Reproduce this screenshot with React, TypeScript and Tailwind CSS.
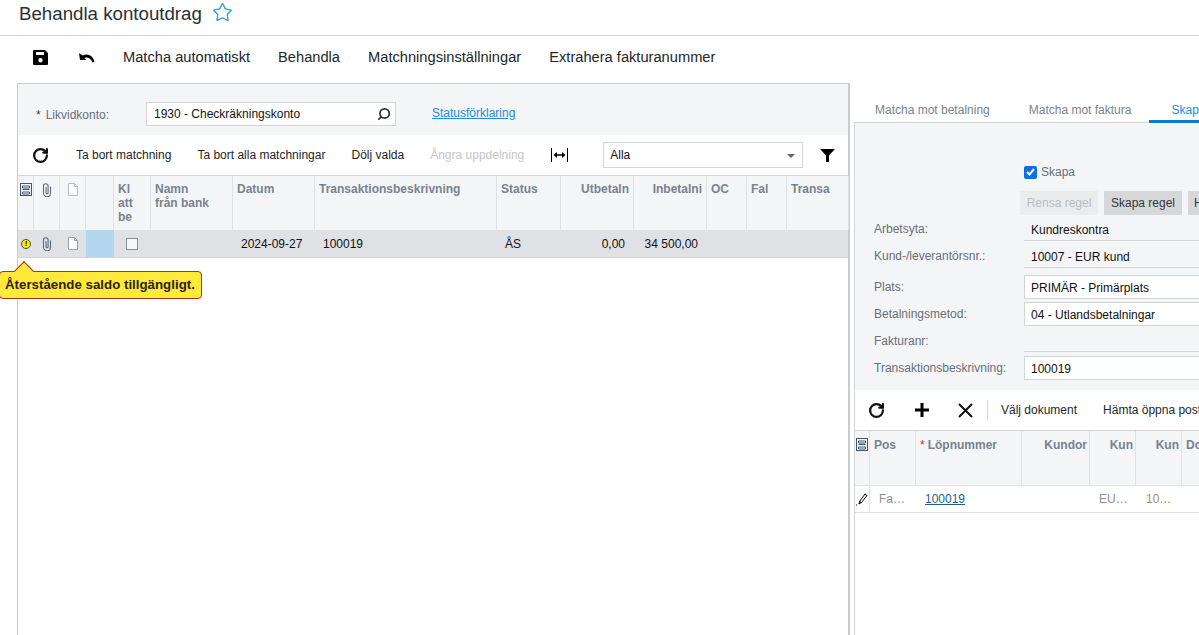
import React from 'react';
import { RotateCw, Search, Star } from 'lucide-react';

const SaveIcon = () => (
  <svg width="15" height="15" viewBox="0 0 15 15">
    <path fillRule="evenodd" fill="#000" d="M1 0h11l3 3v11a1 1 0 0 1-1 1H1a1 1 0 0 1-1-1V1a1 1 0 0 1 1-1zM3 2v3h8V2zM7.500 8a2.200 2.200 0 1 0 0 4.400a2.200 2.200 0 0 0 0-4.400z" />
  </svg>
);

const UndoIcon = () => (
  <svg width="16" height="11" viewBox="0 0 16 11">
    <path fill="#000" d="M0 1l1 7h6.500L5.200 6C8 4.600 11.500 5.500 13.500 10.500L15.500 10C14.500 4 9 0.500 3.500 3.500z" />
  </svg>
);

const ClipIcon = () => (
  <svg width="10" height="14" viewBox="0 0 10 14" fill="none" stroke="#5f6b78" strokeWidth="1.100">
    <path d="M8.500 3.500v6.700a3.500 3.500 0 0 1-7 0V3a2.300 2.300 0 0 1 4.600 0v6.800a1 1 0 0 1-2 0V4" />
  </svg>
);

const FileIcon = ({ color = '#9aa0a6' }: { color?: string }) => (
  <svg width="12" height="13" viewBox="0 0 12 13" fill="none">
    <path d="M1.500 0.500h6l3 3v9h-9z" fill="#fff" stroke={color} />
    <path d="M7.500 0.500v3h3" stroke={color} />
  </svg>
);

const NotesIcon = () => (
  <svg width="12" height="13" viewBox="0 0 12 13" fill="none" stroke="#46566a">
    <rect x="0.500" y="0.500" width="11" height="12" />
    <path d="M2.500 3h7v2h-7zM2.500 6.500h7M2.500 9h7v2h-7z" />
  </svg>
);

const FitIcon = () => (
  <svg width="17" height="14" viewBox="0 0 17 14" fill="#000">
    <rect x="0" y="0" width="1" height="14" />
    <rect x="16" y="0" width="1" height="14" />
    <path d="M2.500 7L6 4v2.300h5V4l3.500 3L11 10V7.700H6V10z" />
  </svg>
);

const FilterIcon = () => (
  <svg width="15" height="13" viewBox="0 0 15 13" fill="#000">
    <path d="M0 0h15L9 6.500V13H6V6.500z" />
  </svg>
);

const PencilIcon = () => (
  <svg width="12" height="13" viewBox="0 0 12 13" fill="none" stroke="#000">
    <path d="M9 1l2 1.500-5.500 7L3.500 8.500zM3.500 8.500L3 11l2.500-1.500" />
    <path d="M0 12h2" strokeDasharray="1 1" />
  </svg>
);

const PlusIcon = () => (
  <svg width="16" height="16" viewBox="0 0 16 16" fill="#000">
    <path d="M6.500 1h3v5.500H15v3H9.500V15h-3V9.500H1v-3h5.500z" />
  </svg>
);

const CloseIcon = () => (
  <svg width="15" height="15" viewBox="0 0 15 15" fill="none" stroke="#111" strokeWidth="2">
    <path d="M1 1l13 13M14 1L1 14" />
  </svg>
);

const columns = [
  { w: 'w-[16px]', label: <NotesIcon />, icon: true },
  { w: 'w-[26px]', label: <ClipIcon />, icon: true },
  { w: 'w-[26px]', label: <FileIcon color="#b8bcc2" />, icon: true },
  { w: 'w-[28px]', label: '' },
  { w: 'w-[37px]', label: <>Kl<br />att<br />be</> },
  { w: 'w-[82px]', label: <>Namn<br />från bank</> },
  { w: 'w-[82px]', label: 'Datum' },
  { w: 'w-[182px]', label: 'Transaktionsbeskrivning' },
  { w: 'w-[64px]', label: 'Status' },
  { w: 'w-[73px]', label: 'Utbetaln', right: true },
  { w: 'w-[73px]', label: 'Inbetalni', right: true },
  { w: 'w-[40px]', label: 'OC' },
  { w: 'w-[40px]', label: 'Fal' },
  { w: 'w-[62px]', label: 'Transa' },
];

const HeadCell = ({ col }: { col: (typeof columns)[number] }) => (
  <div
    className={`${col.w} shrink-0 h-full border-r border-[#dfe1e5] overflow-hidden ${
      col.icon ? 'flex justify-center pt-[7px]' : 'px-[4px] pt-[6px]'
    } ${col.right ? 'text-right' : ''} text-[12px] leading-[14px] font-bold text-[#7b828d] whitespace-nowrap`}
  >
    {col.label}
  </div>
);

const Label = ({ children, top = 'pt-0' }: { children: React.ReactNode; top?: string }) => (
  <div className={`w-[150px] shrink-0 text-[12px] text-[#6a6f78] ${top}`}>{children}</div>
);

const App: React.FC = () => {
  return (
    <div className="w-[1199px] h-[635px] bg-white overflow-hidden flex flex-col font-['Liberation_Sans',Arial,sans-serif] text-black">
      {/* Title */}
      <header className="h-[36px] shrink-0 border-b border-[#d2d4d7] pl-[19px] flex items-start gap-[10px]">
        <h1 className="text-[18.700px] leading-[27px] text-[#2b2f33]">Behandla kontoutdrag</h1>
        <Star size={21} color="#2f9ae0" strokeWidth={1.500} className="mt-[2px]" />
      </header>

      {/* Main toolbar */}
      <div className="h-[47px] shrink-0 flex items-center pl-[33px] pb-[5px] text-[14.670px] text-[#22262a]">
        <SaveIcon />
        <span className="ml-[31px] flex"><UndoIcon /></span>
        <span className="ml-[28px]">Matcha automatiskt</span>
        <span className="ml-[28px]">Behandla</span>
        <span className="ml-[28px]">Matchningsinställningar</span>
        <span className="ml-[28px]">Extrahera fakturanummer</span>
      </div>

      <div className="flex-1 flex min-h-0 pl-[17px]">
        {/* Left panel */}
        <section className="relative w-[833px] shrink-0 border-l border-t border-r-2 border-[#c9cbce] flex flex-col">
          <div className="h-[51px] shrink-0 bg-[#f4f5f7] flex pt-[18px] pl-[18px]">
            <div className="w-[110px] shrink-0 pt-[4px] text-[12px] text-[#6a6f78]">
              <span className="text-[#444] mr-[5px]">*</span>Likvidkonto:
            </div>
            <div className="w-[250px] h-[24px] bg-white border border-[#d2d4d7] flex items-center justify-between pl-[7px] pr-[4px] text-[12px] text-[#111]">
              1930 - Checkräkningskonto
              <Search size={14} color="#333" strokeWidth={3} className="-scale-x-100" />
            </div>
            <a className="ml-[36px] pt-[2px] text-[12px] text-[#1d8ad6] underline">Statusförklaring</a>
          </div>

          <div className="h-[40px] shrink-0 flex items-center text-[12px] text-[#22262a]">
            <RotateCw size={17} color="#111" strokeWidth={3.200} className="shrink-0 ml-[14px]" />
            <span className="ml-[27px]">Ta bort matchning</span>
            <span className="ml-[26px]">Ta bort alla matchningar</span>
            <span className="ml-[26px]">Dölj valda</span>
            <span className="ml-[26px] text-[#c3c6ca]">Ångra uppdelning</span>
            <span className="ml-[27px] flex"><FitIcon /></span>
            <div className="ml-[35px] w-[200px] h-[26px] border border-[#d2d4d7] flex items-center justify-between pl-[6px] pr-[7px] text-[#111]">
              Alla
              <span className="w-0 h-0 border-x-[4px] border-x-transparent border-t-[4px] border-t-[#666] mt-[2px]" />
            </div>
            <span className="ml-[17px] flex"><FilterIcon /></span>
          </div>

          <div className="h-[55px] shrink-0 flex bg-[#f4f5f7] border-t border-[#d2d4d7]">
            {columns.map((c, i) => <HeadCell key={i} col={c} />)}
          </div>

          <div className="h-[28px] shrink-0 flex items-center bg-[#dfe1e5] border-b border-[#d2d4d7] text-[12px] text-[#111]">
            <div className="w-[16px] flex justify-center">
              <span className="w-[10px] h-[10px] rounded-full bg-[#ffe81a] border border-[#55500a] text-[8px] leading-[8px] font-bold text-center">!</span>
            </div>
            <div className="w-[26px] flex justify-center"><ClipIcon /></div>
            <div className="w-[26px] flex justify-center"><FileIcon /></div>
            <div className="w-[28px] h-full bg-[#b3d6f0]" />
            <div className="w-[37px] flex justify-center pr-[2px]">
              <span className="w-[12px] h-[12px] bg-[#f7f7f7] border border-[#8e9297]" />
            </div>
            <div className="w-[82px]" />
            <div className="w-[82px] pl-[8px]">2024-09-27</div>
            <div className="w-[182px] pl-[8px]">100019</div>
            <div className="w-[64px] pl-[8px]">ÅS</div>
            <div className="w-[73px] pr-[9px] text-right">0,00</div>
            <div className="w-[73px] pr-[9px] text-right">34 500,00</div>
          </div>

          {/* Warning tooltip */}
          <div className="absolute left-[-19px] top-[187px] z-10 w-[203px] h-[28px] bg-[#ffe93b] border border-[#a5322a] rounded-[4px] flex items-center pl-[5px] text-[13.300px] font-bold text-[#2a2410] whitespace-nowrap">
            <span className="absolute left-[17px] top-[-8px] w-[14px] h-[14px] rotate-45 bg-[#ffe93b] border-l border-t border-[#a5322a]" />
            <span className="relative">Återstående saldo tillgängligt.</span>
          </div>
        </section>

        {/* Right panel */}
        <section className="ml-[4px] flex-1 min-w-0 overflow-hidden flex flex-col pt-[7px]">
          <nav className="h-[33px] shrink-0 flex text-[12px] text-[#7b828d] border-b border-[#d2d4d7] whitespace-nowrap">
            <span className="ml-[21px] pt-[11px]">Matcha mot betalning</span>
            <span className="ml-[39px] pt-[11px]">Matcha mot faktura</span>
            <span className="ml-[18px] pl-[22px] flex-1 pt-[11px] h-[33px] border-b-[3px] border-[#0a78d0] text-[#1d8ad6]">Skapa</span>
          </nav>

          <div className="flex-1 min-h-0 border-l border-[#d2d4d7] flex flex-col">
            <div className="h-[267px] shrink-0 bg-[#f4f5f7] pl-[19px] text-[12px] flex flex-col">
              <div className="mt-[42px] h-[14px] pl-[150px] flex items-center gap-[4px] text-[#6a6f78]">
                <span className="w-[13px] h-[13px] rounded-[2px] bg-[#0a6fe8] flex items-center justify-center">
                  <svg width="9" height="8" viewBox="0 0 9 8" fill="none" stroke="#fff" strokeWidth="2"><path d="M1 4l2.500 2.500L8 1" /></svg>
                </span>
                Skapa
              </div>
              <div className="mt-[12px] h-[24px] pl-[146px] flex gap-[6px]">
                <span className="w-[78px] shrink-0 bg-[#ebecee] text-[#b9bcc1] flex items-center justify-center">Rensa regel</span>
                <span className="w-[78px] shrink-0 bg-[#d6d7d9] text-[#33373b] flex items-center justify-center">Skapa regel</span>
                <span className="w-[78px] shrink-0 bg-[#d6d7d9] text-[#33373b] pl-[6px] flex items-center">Hämta</span>
              </div>
              <div className="mt-[3px] h-[23px] flex">
                <Label top="pt-[2px]">Arbetsyta:</Label>
                <div className="w-[340px] shrink-0 h-full border-b border-[#d2d4d7] pl-[7px] pt-[3px] text-[#111]">Kundreskontra</div>
              </div>
              <div className="mt-[4px] h-[23px] flex">
                <Label top="pt-[2px]">Kund-/leverantörsnr.:</Label>
                <div className="w-[340px] shrink-0 h-full border-b border-[#d2d4d7] pl-[7px] pt-[3px] text-[#111]">10007 - EUR kund</div>
              </div>
              <div className="mt-[7px] h-[24px] flex">
                <Label top="pt-[3px]">Plats:</Label>
                <div className="w-[340px] shrink-0 h-full bg-white border border-[#d2d4d7] pl-[6px] pt-[3px] text-[#111]">PRIMÄR - Primärplats</div>
              </div>
              <div className="mt-[3px] h-[24px] flex">
                <Label top="pt-[3px]">Betalningsmetod:</Label>
                <div className="w-[340px] shrink-0 h-full bg-white border border-[#d2d4d7] pl-[6px] pt-[3px] text-[#111]">04 - Utlandsbetalningar</div>
              </div>
              <div className="mt-[6px] h-[20px] flex">
                <Label>Fakturanr:</Label>
                <div className="w-[340px] shrink-0 h-[20px] border-b border-[#d2d4d7]" />
              </div>
              <div className="mt-[4px] h-[24px] flex">
                <Label top="pt-[3px]">Transaktionsbeskrivning:</Label>
                <div className="w-[340px] shrink-0 h-full bg-white border border-[#d2d4d7] pl-[6px] pt-[3px] text-[#111]">100019</div>
              </div>
            </div>

            <div className="h-[40px] shrink-0 flex items-center text-[12px] text-[#22262a] whitespace-nowrap">
              <RotateCw size={17} color="#111" strokeWidth={3.200} className="shrink-0 ml-[13px]" />
              <span className="ml-[29px] flex shrink-0"><PlusIcon /></span>
              <span className="ml-[28px] flex shrink-0"><CloseIcon /></span>
              <span className="ml-[14px] shrink-0 w-px h-[20px] bg-[#d2d4d7]" />
              <span className="ml-[13px] shrink-0">Välj dokument</span>
              <span className="ml-[26px] shrink-0">Hämta öppna poster</span>
            </div>

            <div className="h-[55px] shrink-0 flex bg-[#f4f5f7] border-t border-[#d2d4d7] text-[12px] font-bold text-[#7b828d] whitespace-nowrap">
              <div className="w-[15px] shrink-0 border-r border-[#dfe1e5] flex justify-center pt-[7px]"><NotesIcon /></div>
              <div className="w-[46px] shrink-0 border-r border-[#dfe1e5] pl-[4px] pt-[5px]">Pos</div>
              <div className="w-[106px] shrink-0 border-r border-[#dfe1e5] pl-[4px] pt-[5px]"><span className="text-[#e0242a] font-normal mr-[3px]">*</span>Löpnummer</div>
              <div className="w-[68px] shrink-0 border-r border-[#dfe1e5] pr-[2px] pt-[5px] text-right">Kundor</div>
              <div className="w-[46px] shrink-0 border-r border-[#dfe1e5] pt-[5px] pr-[2px] text-right">Kun</div>
              <div className="w-[46px] shrink-0 border-r border-[#dfe1e5] pt-[5px] pr-[2px] text-right">Kun</div>
              <div className="pl-[4px] pt-[5px]">Dok</div>
            </div>

            <div className="h-[28px] shrink-0 flex items-center border-t border-b border-[#dfe1e5] text-[12px] whitespace-nowrap">
              <div className="w-[15px] shrink-0 h-full border-r border-[#dfe1e5] flex items-center justify-center"><PencilIcon /></div>
              <div className="w-[46px] shrink-0 pl-[9px] text-[#8a8f96]">Fa…</div>
              <div className="w-[106px] shrink-0 pl-[9px] text-[#1f5f8f] underline">100019</div>
              <div className="w-[68px] shrink-0" />
              <div className="w-[46px] shrink-0 pl-[9px] text-[#8a8f96]">EU…</div>
              <div className="w-[46px] shrink-0 pl-[10px] text-[#b08a5a]">10…</div>
            </div>
          </div>
        </section>
      </div>
    </div>
  );
};

export default App;
